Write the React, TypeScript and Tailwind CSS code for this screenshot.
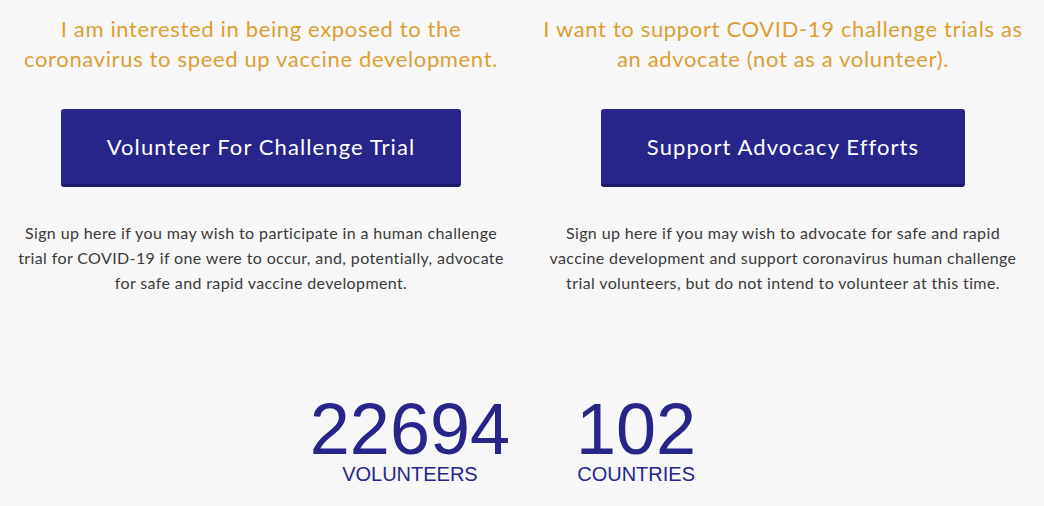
const options = [
  {
    heading: 'I am interested in being exposed to the coronavirus to speed up vaccine development.',
    button: 'Volunteer For Challenge Trial',
    body: 'Sign up here if you may wish to participate in a human challenge trial for COVID-19 if one were to occur, and, potentially, advocate for safe and rapid vaccine development.',
  },
  {
    heading: 'I want to support COVID-19 challenge trials as an advocate (not as a volunteer).',
    button: 'Support Advocacy Efforts',
    body: 'Sign up here if you may wish to advocate for safe and rapid vaccine development and support coronavirus human challenge trial volunteers, but do not intend to volunteer at this time.',
  },
];

const stats = [
  { value: '22694', label: 'VOLUNTEERS' },
  { value: '102', label: 'COUNTRIES' },
];

export default function App() {
  return (
    <div className="min-h-screen bg-[#f7f7f7] w-[1044px] h-[506px] overflow-hidden">
      <div className="grid grid-cols-2 pt-[14px]">
        {options.map((opt) => (
          <div key={opt.button} className="flex flex-col items-center px-[10px]">
            <h2 className="text-center text-[22px] leading-[30px] tracking-[0.65px] text-[#dc9f35] font-['Lato',sans-serif] max-w-[484px]">
              {opt.heading}
            </h2>
            <button className="mt-[35px] h-[78px] px-[46px] rounded-[3px] bg-[#27258a] border-b-[3px] border-[#1c1a66] text-white text-[22px] tracking-[1.1px] font-['Lato',sans-serif]">
              {opt.button}
            </button>
            <p className="mt-[33px] text-center text-[16px] leading-[25px] tracking-[0.38px] text-[#3a3a3a] font-['Lato',sans-serif] max-w-[488px]">
              {opt.body}
            </p>
          </div>
        ))}
      </div>

      <div className="flex justify-center gap-[66px] pr-[38px] mt-[103px] font-['Liberation_Sans',Arial,sans-serif] text-[#27258a]">
        {stats.map((s) => (
          <div key={s.label} className="flex flex-col items-center">
            <div className="text-[72px] leading-[62px]">{s.value}</div>
            <div className="text-[20px] leading-[24px] mt-[2px]">{s.label}</div>
          </div>
        ))}
      </div>
    </div>
  );
}
